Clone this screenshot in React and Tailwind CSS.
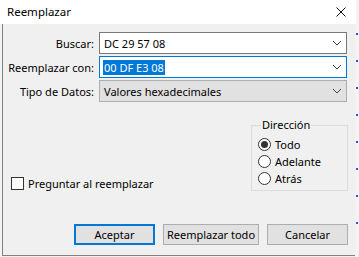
import React from "react";

const font = { fontFamily: '"Noto Sans", "Segoe UI", sans-serif' };

function Chevron() {
  return (
    <svg width="10" height="6" viewBox="0 0 10 6" className="shrink-0">
      <polyline points="1,1 5,5 9,1" fill="none" stroke="#444" strokeWidth="1" />
    </svg>
  );
}

function Radio({ checked, label }) {
  return (
    <div className="flex items-center gap-[4px] h-[17px]">
      <div className="w-[13px] h-[13px] rounded-full border border-[#333] bg-white flex items-center justify-center">
        {checked && <div className="w-[7px] h-[7px] rounded-full bg-[#333]" />}
      </div>
      <span>{label}</span>
    </div>
  );
}

export default function App() {
  return (
    <div className="w-[359px] h-[257px] bg-[#f3f3f3] flex text-[11px] text-black leading-none whitespace-nowrap" style={font}>
      <div className="w-[356px] h-[256px] flex flex-col">
        <div className="h-[24px] bg-white flex items-center justify-between pl-[7px] pr-[10px]">
          <span className="text-[11.5px]">Reemplazar</span>
          <svg width="10" height="10" viewBox="0 0 10 10">
            <path d="M0.5 0.5 L9.5 9.5 M9.5 0.5 L0.5 9.5" stroke="#111" strokeWidth="1" />
          </svg>
        </div>
        <div className="flex-1 ml-[2px] mr-[1px] bg-[#f0f0f0] border-l border-b border-[#808080] flex flex-col pt-[8px]">
          <div className="grid grid-cols-[91px_248px] gap-x-[5px] gap-y-[2px] items-center">
            <span className="text-right">Buscar:</span>
            <div className="h-[22px] bg-white border border-[#7a7a7a] flex items-center justify-between pl-[4px] pr-[4px]">
              <span>DC 29 57 08</span>
              <Chevron />
            </div>
            <span className="text-right">Reemplazar con:</span>
            <div className="h-[22px] bg-white border border-[#0078d7] flex items-center justify-between pl-[3px] pr-[4px]">
              <span className="bg-[#0078d7] text-white px-[1px] py-[2px]">00 DF E3 08</span>
              <Chevron />
            </div>
            <span className="text-right">Tipo de Datos:</span>
            <div className="h-[22px] bg-[#e1e1e1] border border-[#adadad] flex items-center justify-between pl-[4px] pr-[4px]">
              <span>Valores hexadecimales</span>
              <Chevron />
            </div>
          </div>
          <div className="flex items-end justify-between mt-[23px] pl-[8px] pr-[7px]">
            <div className="flex items-center gap-[4px] mb-[1px]">
              <div className="w-[13px] h-[13px] border border-[#333] bg-white" />
              <span>Preguntar al reemplazar</span>
            </div>
            <div className="relative w-[97px] h-[66px] border border-[#dcdcdc] pt-[10px] pl-[6px]">
              <span className="absolute left-[9px] top-[-7px] bg-[#f0f0f0] px-[1px]">Dirección</span>
              <Radio checked label="Todo" />
              <Radio label="Adelante" />
              <Radio label="Atrás" />
            </div>
          </div>
          <div className="flex justify-end gap-[8px] mt-[33px] pr-[7px]">
            <button className="w-[81px] h-[21px] bg-[#e1e1e1] border-2 border-[#0078d7]">Aceptar</button>
            <button className="w-[96px] h-[21px] bg-[#e1e1e1] border border-[#adadad]">Reemplazar todo</button>
            <button className="w-[81px] h-[21px] bg-[#e1e1e1] border border-[#adadad]">Cancelar</button>
          </div>
        </div>
      </div>
      <div className="flex-1 flex flex-col justify-around items-end pr-[1px] py-[20px]">
        {[0, 1, 2, 3, 4, 5, 6, 7].map((i) => (
          <div key={i} className="w-[2px] h-[2px] bg-[#2a5bd0]" />
        ))}
      </div>
    </div>
  );
}
